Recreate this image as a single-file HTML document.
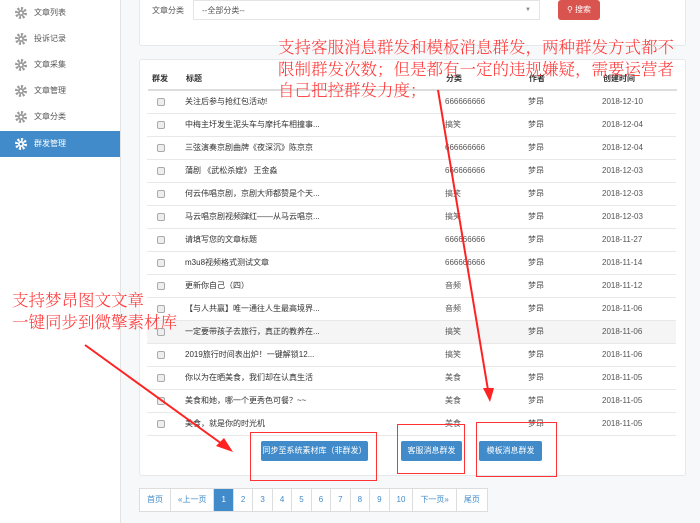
<!DOCTYPE html>
<html><head><meta charset="utf-8"><style>
*{box-sizing:border-box;margin:0;padding:0}
body{width:700px;height:523px;overflow:hidden;background:#f7f8f9;font-family:"Liberation Sans","Noto Sans CJK SC",sans-serif;font-size:8px;color:#333;position:relative}
.side{position:absolute;left:0;top:0;width:121px;height:523px;background:#fff;border-right:1px solid #e3e3e3}
.si{position:absolute;left:0;width:120px;height:26px;line-height:26px;padding-left:34px;color:#555}
.si .g{position:absolute;left:15px;top:7px;width:12px;height:12px}
.si.act{background:#428bca;color:#fff}
.panel{position:absolute;background:#fff;border:1px solid #e5e9ec;border-radius:3px}
.row{position:absolute;left:8px;width:529px;height:23px;border-bottom:1px solid #e8e8e8;line-height:22px}
.row span{position:absolute}
.cb{position:absolute;left:10px;top:7px;width:8px;height:8px;border:1px solid #aaa;border-radius:2px;background:#eee}
.btn{position:absolute;top:441px;height:20px;line-height:20px;background:#428bca;color:#fff;border-radius:2px;text-align:center;font-size:8px}
.rb{position:absolute;border:1.5px solid #f33}
.pg{position:absolute;top:488px;left:139px;height:24px;display:flex;border:1px solid #ddd;background:#fff}
.pg div{padding:0 7px;line-height:22px;border-right:1px solid #ddd;color:#428bca;font-size:8px}
.pg div.a{background:#428bca;color:#fff}
.ann{position:absolute;color:#f33;font-family:"Noto Serif CJK SC","Liberation Serif",serif;font-size:16.5px;line-height:21.5px;white-space:nowrap;font-weight:300}
</style></head><body>
<div class="side">
<div class="si" style="top:0"><svg class="g" viewBox="0 0 12 12"><circle cx="6" cy="6" r="4.5" fill="none" stroke="#999" stroke-width="3" stroke-dasharray="2 1.5"/><circle cx="6" cy="6" r="3" fill="#999"/><circle cx="6" cy="6" r="1.3" fill="#fff"/></svg>文章列表</div>
<div class="si" style="top:26px"><svg class="g" viewBox="0 0 12 12"><circle cx="6" cy="6" r="4.5" fill="none" stroke="#999" stroke-width="3" stroke-dasharray="2 1.5"/><circle cx="6" cy="6" r="3" fill="#999"/><circle cx="6" cy="6" r="1.3" fill="#fff"/></svg>投诉记录</div>
<div class="si" style="top:52px"><svg class="g" viewBox="0 0 12 12"><circle cx="6" cy="6" r="4.5" fill="none" stroke="#999" stroke-width="3" stroke-dasharray="2 1.5"/><circle cx="6" cy="6" r="3" fill="#999"/><circle cx="6" cy="6" r="1.3" fill="#fff"/></svg>文章采集</div>
<div class="si" style="top:78px"><svg class="g" viewBox="0 0 12 12"><circle cx="6" cy="6" r="4.5" fill="none" stroke="#999" stroke-width="3" stroke-dasharray="2 1.5"/><circle cx="6" cy="6" r="3" fill="#999"/><circle cx="6" cy="6" r="1.3" fill="#fff"/></svg>文章管理</div>
<div class="si" style="top:104px"><svg class="g" viewBox="0 0 12 12"><circle cx="6" cy="6" r="4.5" fill="none" stroke="#999" stroke-width="3" stroke-dasharray="2 1.5"/><circle cx="6" cy="6" r="3" fill="#999"/><circle cx="6" cy="6" r="1.3" fill="#fff"/></svg>文章分类</div>
<div class="si act" style="top:131px"><svg class="g" viewBox="0 0 12 12"><circle cx="6" cy="6" r="4.5" fill="none" stroke="#fff" stroke-width="3" stroke-dasharray="2 1.5"/><circle cx="6" cy="6" r="3" fill="#fff"/><circle cx="6" cy="6" r="1.3" fill="#428bca"/></svg>群发管理</div>
</div>

<div class="panel" style="left:139px;top:-5px;width:547px;height:51px"></div>
<div style="position:absolute;left:152px;top:5px;color:#555">文章分类</div>
<div style="position:absolute;left:193px;top:0;width:347px;height:20px;border:1px solid #e5e5e5;background:#fff;line-height:19px;padding-left:8px;color:#555">--全部分类--<span style="position:absolute;right:8px;color:#888;font-size:6px">▼</span></div>
<div style="position:absolute;left:558px;top:0;width:42px;height:20px;background:#d9534f;color:#fff;border-radius:3px;line-height:20px;text-align:center">&#9906; 搜索</div>

<div class="panel" style="left:139px;top:59px;width:547px;height:417px">
<div class="row" style="top:8px;border-bottom:2px solid #ddd;font-weight:bold;height:23px"><span style="left:4px">群发</span><span style="left:38px">标题</span><span style="left:298px">分类</span><span style="left:381px">作者</span><span style="left:455px">创建时间</span></div>
</div>
<div id="rows" style="position:absolute;left:139px;top:0"></div>
<script>
var d=[["关注后参与抢红包活动!","666666666","2018-12-10"],["中梅主圩发生泥头车与摩托车相撞事...","搞笑","2018-12-04"],["三弦演奏京剧曲牌《夜深沉》陈京京","666666666","2018-12-04"],["蒲剧 《武松杀嫂》 王金淼","666666666","2018-12-03"],["何云伟唱京剧，京剧大师都赞是个天...","搞笑","2018-12-03"],["马云唱京剧视频蹿红——从马云唱京...","搞笑","2018-12-03"],["请填写您的文章标题","666666666","2018-11-27"],["m3u8视频格式测试文章","666666666","2018-11-14"],["更新你自己（四）","音频","2018-11-12"],["【与人共赢】唯一通往人生最高境界...","音频","2018-11-06"],["一定要带孩子去旅行，真正的教养在...","搞笑","2018-11-06"],["2019旅行时间表出炉！一键解锁12...","搞笑","2018-11-06"],["你以为在晒美食，我们却在认真生活","美食","2018-11-05"],["美食和她，哪一个更秀色可餐？~~","美食","2018-11-05"],["美食，就是你的时光机","美食","2018-11-05"]];
var h="";d.forEach(function(r,i){h+='<div class="row" style="top:'+(91+i*23)+'px;'+(i==10?'background:#f5f5f5':'')+'"><i class="cb"></i><span style="left:38px">'+r[0]+'</span><span style="left:298px;color:#555">'+r[1]+'</span><span style="left:381px;color:#555">梦昂</span><span style="left:455px;color:#555">'+r[2]+'</span></div>';});
document.getElementById("rows").innerHTML=h;
</script>

<div class="btn" style="left:261px;width:107px">同步至系统素材库（非群发）</div>
<div class="btn" style="left:401px;width:61px">客服消息群发</div>
<div class="btn" style="left:479px;width:63px">模板消息群发</div>
<div class="rb" style="left:250px;top:432px;width:127px;height:49px"></div>
<div class="rb" style="left:397px;top:424px;width:68px;height:50px"></div>
<div class="rb" style="left:476px;top:422px;width:81px;height:55px"></div>

<div class="pg"><div>首页</div><div>«上一页</div><div class="a">1</div><div>2</div><div>3</div><div>4</div><div>5</div><div>6</div><div>7</div><div>8</div><div>9</div><div>10</div><div>下一页»</div><div style="border:none">尾页</div></div>

<div class="ann" style="left:278px;top:36px">支持客服消息群发和模板消息群发，两种群发方式都不<br>限制群发次数；但是都有一定的违规嫌疑，需要运营者<br>自己把控群发力度；</div>
<div class="ann" style="left:12px;top:289px">支持梦昂图文文章<br>一键同步到微擎素材库</div>

<svg style="position:absolute;left:0;top:0" width="700" height="523">
<line x1="438" y1="90" x2="488" y2="390" stroke="#f22" stroke-width="2"/>
<polygon points="483,388 494,388 490,402" fill="#f22"/>
<line x1="85" y1="345" x2="222" y2="444" stroke="#f22" stroke-width="2"/>
<polygon points="216,446 224,438 233,452" fill="#f22"/>
</svg>
</body></html>
